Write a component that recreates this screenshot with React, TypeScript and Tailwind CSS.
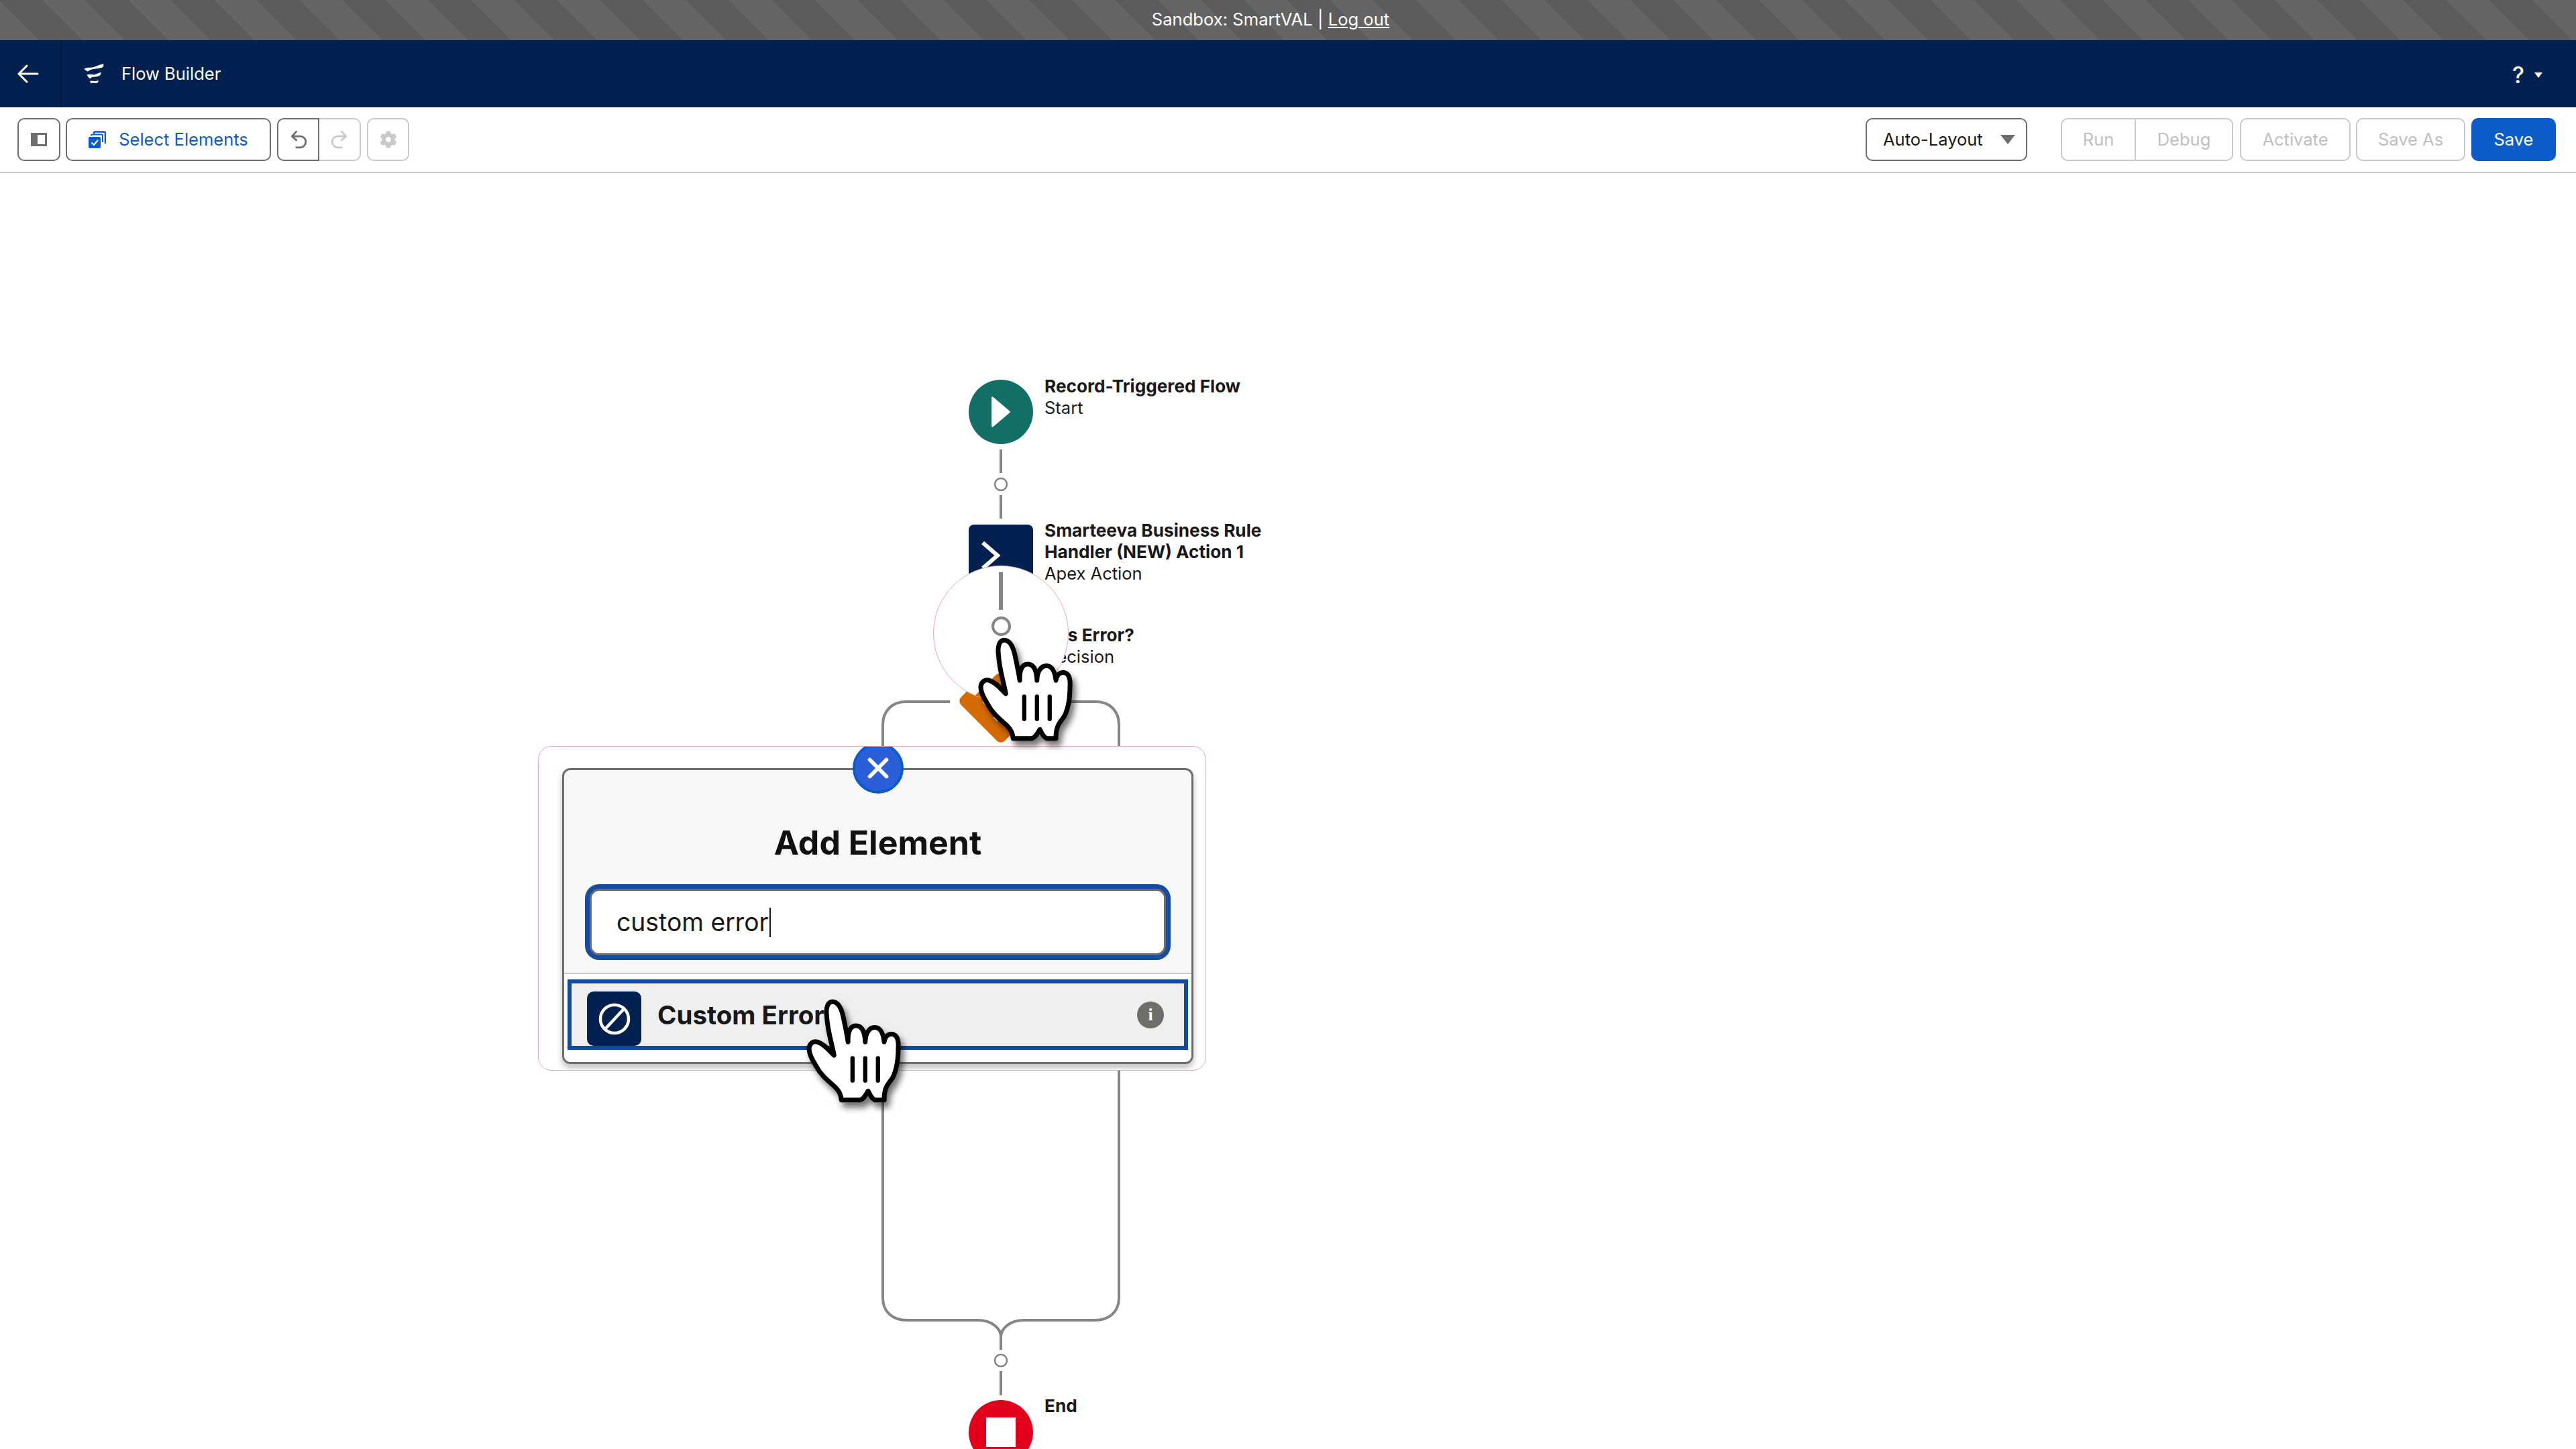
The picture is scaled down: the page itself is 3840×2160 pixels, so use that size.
import React from "react";
import { FaCog } from "react-icons/fa";

const HAND =
  "M330 605 C328 585 325 570 300 545 C265 515 235 490 215 450 C200 425 185 400 185 372 C188 350 205 340 222 345 C255 355 275 385 297 405 C290 360 268 300 264 225 C260 190 270 165 290 165 C315 165 330 190 340 240 C348 280 355 310 360 345 C358 300 370 272 395 272 C420 272 435 295 437 345 C438 305 455 280 480 280 C505 280 518 310 522 345 C525 320 540 308 560 310 C580 315 587 340 585 370 C585 420 578 470 560 505 C545 530 520 545 522 605 L480 605 C465 600 455 575 450 565 C440 580 430 605 410 605 Z";

function Hand({ className }: { className: string }) {
  return (
    <svg
      viewBox="170 150 430 470"
      className={"absolute w-[143px] h-[157px] drop-shadow-[5px_8px_5px_rgba(0,0,0,0.55)] " + className}
    >
      <path d={HAND} fill="#fff" stroke="#000" strokeWidth="21" strokeLinejoin="round" strokeLinecap="round" />
      <path d="M380 418V518M437 418V518M494 418V518" stroke="#000" strokeWidth="19" strokeLinecap="round" fill="none" />
    </svg>
  );
}

function NodeLabel({ title, sub, className }: { title: string[]; sub: string; className: string }) {
  return (
    <div className={"absolute text-[25.5px] leading-[32px] text-[#181818] whitespace-nowrap " + className}>
      {title.map((t) => (
        <div key={t} className="font-bold text-[26.2px]">
          {t}
        </div>
      ))}
      {sub ? <div>{sub}</div> : null}
    </div>
  );
}

function Connectors() {
  return (
    <svg viewBox="0 258 3840 1902" className="absolute left-0 top-0 w-[3840px] h-[1902px]" fill="none">
      <g stroke="#858585" strokeWidth="4">
        <path d="M1492 670V705M1492 738V773" />
        <circle cx="1492" cy="722" r="9" fill="#fff" strokeWidth="2.5" />
        <path d="M1416 1046H1350C1330 1046 1316 1060 1316 1080V1935C1316 1955 1330 1968 1352 1968H1458C1478 1968 1492 1980 1492 1993C1492 1980 1506 1968 1526 1968H1632C1654 1968 1668 1955 1668 1935V1080C1668 1060 1654 1046 1634 1046H1560" />
        <path d="M1492 1990V2012M1492 2044V2080" />
        <circle cx="1492" cy="2028" r="9" fill="#fff" strokeWidth="2.5" />
      </g>
    </svg>
  );
}

export default function App() {
  return (
    <div className="w-[3840px] h-[2160px] flex flex-col overflow-hidden bg-white font-['Inter',sans-serif] text-[#181818]">
      <div className="h-[60px] flex items-center justify-center text-[25.6px] text-white bg-[repeating-linear-gradient(45deg,#656565_0,#656565_41.7px,#5c5c5c_41.7px,#5c5c5c_87px,#656565_87px,#656565_90.5px)]">
        <span className="-translate-x-[26px] -translate-y-[1px]">
          Sandbox: SmartVAL | <span className="underline">Log out</span>
        </span>
      </div>

      <div className="h-[100px] flex items-center bg-[#032150] text-white">
        <div className="w-[92px] h-full flex items-center justify-center pr-[6px] border-r-2 border-[#02153a]">
          <svg viewBox="0 0 32 32" className="w-[32px] h-[32px]" fill="none" stroke="#fff" strokeWidth="3" strokeLinecap="round" strokeLinejoin="round">
            <path d="M30 16H2M14 4L2 16L14 28" />
          </svg>
        </div>
        <svg viewBox="375 285 90 90" className="ml-[33px] w-[30px] h-[30px]" fill="#fff">
          <path d="M376 308C395 298 410 306 425 298C440 292 450 288 462 286C466 296 460 302 450 304C430 310 410 306 392 320C386 316 380 312 376 308Z" />
          <path d="M388 335C402 328 415 338 428 332C438 328 445 325 452 323C452 333 446 340 436 342C422 345 412 342 402 352C396 346 392 340 388 335Z" />
          <path d="M402 364C412 358 420 366 430 362L441 360C440 368 436 372 428 372C420 372 412 368 408 374Z" />
        </svg>
        <div className="ml-[26px] text-[25.5px]">Flow Builder</div>
        <div className="ml-auto mr-[50px] flex items-center gap-[15px] translate-y-[2px]">
          <span className="text-[34px] font-medium leading-none">?</span>
          <span className="w-0 h-0 border-x-[6px] border-x-transparent border-t-[8px] border-t-white" />
        </div>
      </div>

      <div className="h-[98px] flex items-center pl-[26px] pr-[30px] border-b-[2px] border-[#c9c9c9] text-[25.5px]">
        <button className="w-[64px] h-[64px] flex items-center justify-center rounded-[10px] border-2 border-[#706e6b]">
          <span className="w-[24px] h-[20px] border-[3px] border-[#706e6b] bg-white flex">
            <span className="w-[7px] h-full bg-[#706e6b]" />
          </span>
        </button>
        <button className="ml-[8px] w-[306px] h-[64px] flex items-center justify-center gap-[19px] rounded-[10px] border-2 border-[#706e6b] text-[#0b5cca]">
          <svg viewBox="0 0 26 26" className="w-[26px] h-[26px]" fill="none">
            <path d="M8 3.5Q8 1.5 10 1.5H23Q25 1.5 25 3.5V18" stroke="#0b5cca" strokeWidth="2.5" strokeLinecap="round" />
            <path d="M4 7.5Q4 5.5 6 5.5H19Q21 5.5 21 7.5V17" stroke="#0b5cca" strokeWidth="2" />
            <rect x="0" y="9" width="18" height="17" rx="2" fill="#0b5cca" />
            <path d="M4.5 17.5L8 21L14 14" stroke="#fff" strokeWidth="2.2" />
          </svg>
          Select Elements
        </button>
        <div className="ml-[9px] flex h-[64px]">
          <button className="w-[63px] flex items-center justify-center rounded-l-[10px] border-2 border-[#706e6b]">
            <svg viewBox="0 0 26 26" className="w-[28px] h-[28px]" fill="none" stroke="#706e6b" strokeWidth="2.6" strokeLinecap="round" strokeLinejoin="round">
              <path d="M10 2L4 8.5L10 14" />
              <path d="M5 8.5H15C20 8.5 23 12 23 16S20 24 15 24H10" />
            </svg>
          </button>
          <button className="w-[62px] flex items-center justify-center rounded-r-[10px] border-2 border-l-0 border-[#c9c9c9]">
            <svg viewBox="0 0 26 26" className="w-[28px] h-[28px]" fill="none" stroke="#c9c9c9" strokeWidth="2.6" strokeLinecap="round" strokeLinejoin="round">
              <path d="M16 2L22 8.5L16 14" />
              <path d="M21 8.5H11C6 8.5 3 12 3 16S6 24 11 24H16" />
            </svg>
          </button>
        </div>
        <button className="ml-[9px] w-[63px] h-[64px] flex items-center justify-center rounded-[10px] border-2 border-[#c9c9c9] text-[#c9c9c9]">
          <FaCog className="w-[26px] h-[26px]" />
        </button>

        <div className="ml-auto flex items-center h-[64px] text-[#c0c0c0]">
          <button className="w-[241px] h-full flex items-center justify-between pl-[24px] pr-[16px] rounded-[10px] border-2 border-[#706e6b] text-[#181818]">
            Auto-Layout
            <span className="w-0 h-0 border-x-[11px] border-x-transparent border-t-[14px] border-t-[#706e6b]" />
          </button>
          <div className="ml-[50px] flex h-full">
            <button className="w-[112px] rounded-l-[10px] border-2 border-[#c9c9c9]">Run</button>
            <button className="w-[145px] rounded-r-[10px] border-2 border-l-0 border-[#c9c9c9]">Debug</button>
          </div>
          <button className="ml-[10px] w-[165px] h-full rounded-[10px] border-2 border-[#c9c9c9]">Activate</button>
          <button className="ml-[8px] w-[163px] h-full rounded-[10px] border-2 border-[#c9c9c9]">Save As</button>
          <button className="ml-[9px] w-[126px] h-full rounded-[10px] bg-[#0b5cca] text-white">Save</button>
        </div>
      </div>

      <div className="relative flex-1 overflow-hidden">
        <Connectors />

        <div className="absolute left-[1444px] top-[308px] w-[96px] h-[96px] rounded-full bg-[#136f66] flex items-center justify-center">
          <svg viewBox="0 0 30 48" className="w-[30px] h-[46px]">
            <path d="M2 2L28 24L2 46Z" fill="#fff" stroke="#fff" strokeWidth="3" strokeLinejoin="round" />
          </svg>
        </div>
        <NodeLabel className="left-[1557px] top-[302px]" title={["Record-Triggered Flow"]} sub="Start" />

        <div className="absolute left-[1444px] top-[524px] w-[96px] h-[96px] rounded-[8px] bg-[#032150] pt-[25px] pl-[19px]">
          <svg viewBox="0 0 28 42" className="w-[28px] h-[42px]" fill="none" stroke="#fff" strokeWidth="6">
            <path d="M2 2L24 21L2 40" />
          </svg>
        </div>
        <NodeLabel
          className="left-[1557px] top-[517px]"
          title={["Smarteeva Business Rule", "Handler (NEW) Action 1"]}
          sub="Apex Action"
        />

        <div className="absolute left-[1446px] top-[741px] w-[92px] h-[92px] rotate-45 rounded-[8px] bg-[#d66b05]" />
        <div className="absolute left-[1466px] top-[785px] w-[8px] h-[8px] rotate-45 bg-[#dddddd]" />
        <div className="absolute left-[1482px] top-[808px] w-[8px] h-[8px] rotate-45 bg-[#dddddd]" />
        <NodeLabel className="left-[1557px] top-[673px]" title={["Has Error?"]} sub="Decision" />

        <div className="absolute left-[1391px] top-[585px] w-[202px] h-[202px] rounded-full bg-white border border-[#e9a9b2] overflow-hidden">
          <div className="absolute left-[97px] top-[9px] w-[6px] h-[56px] bg-[#858585] blur-[0.6px]" />
          <div className="absolute left-[86px] top-[75px] w-[29px] h-[29px] rounded-full border-[4px] border-[#858585] bg-white blur-[0.6px]" />
          <div className="absolute left-[31px] top-[183px] w-[138px] h-[138px] rotate-45 rounded-[12px] bg-[#d66b05]" />
        </div>

        <div className="absolute left-[1444px] top-[1829px] w-[96px] h-[96px] rounded-full bg-[#e3001c] flex items-center justify-center">
          <div className="w-[44px] h-[44px] bg-white" />
        </div>
        <NodeLabel className="left-[1557px] top-[1822px]" title={["End"]} sub="" />

        <div className="absolute left-[802px] top-[854px] w-[996px] h-[484px] rounded-[20px] border border-[#e9a9b2] bg-white overflow-hidden pl-[35px] pt-[32px]">
          <div className="w-[941px] h-[441px] rounded-[12px] border-[3px] border-[#706e6b] bg-[#f8f8f6] shadow-[0_6px_10px_rgba(0,0,0,0.25)] overflow-hidden">
            <div className="pt-[78px] text-center text-[50px] leading-[60px] font-bold text-[#111]">Add Element</div>
            <div className="mt-[39px] mx-[38px] h-[99px] rounded-[14px] border-[3px] border-[#706e6b] bg-white ring-[7px] ring-[#174c9e] flex items-center pl-[37px] text-[37.3px] text-[#181818]">
              custom error
              <span className="ml-[1px] w-[2px] h-[44px] bg-[#181818]" />
            </div>
            <div className="mt-[26px] h-[2px] bg-[#c9c9c9]" />
            <div className="bg-[#fdfdfc] h-[137px] pt-[8px] px-[5px]">
              <div className="h-[105px] border-[6px] border-[#124a9c] bg-[#efefef] flex items-center pl-[23px] pr-[30px]">
                <div className="mt-[12px] w-[81px] h-[81px] rounded-[10px] bg-[#032150] flex items-center justify-center">
                  <svg viewBox="0 0 48 48" className="w-[48px] h-[48px]" fill="none" stroke="#fff" strokeWidth="4.5">
                    <circle cx="24" cy="24" r="21" />
                    <path d="M10 39L38 9" />
                  </svg>
                </div>
                <div className="ml-[24px] mt-[2px] text-[38.5px] font-bold text-[#181818]">Custom Error</div>
                <div className="ml-auto w-[40px] h-[40px] rounded-full bg-[#706e6b] flex items-center justify-center text-white text-[26px] font-bold font-['Liberation_Serif',serif]">
                  i
                </div>
              </div>
            </div>
          </div>
          <button className="absolute left-[468px] top-[-6px] w-[76px] h-[76px] rounded-full bg-[#2a5fd9] border-[4px] border-[#0b5cca] flex items-center justify-center">
            <svg viewBox="0 0 30 30" className="w-[34px] h-[34px]" fill="none" stroke="#fff" strokeWidth="5" strokeLinecap="round">
              <path d="M4 4L26 26M26 4L4 26" />
            </svg>
          </button>
        </div>

        <Hand className="left-[1457px] top-[691px]" />
        <Hand className="left-[1201px] top-[1230px]" />
      </div>
    </div>
  );
}
